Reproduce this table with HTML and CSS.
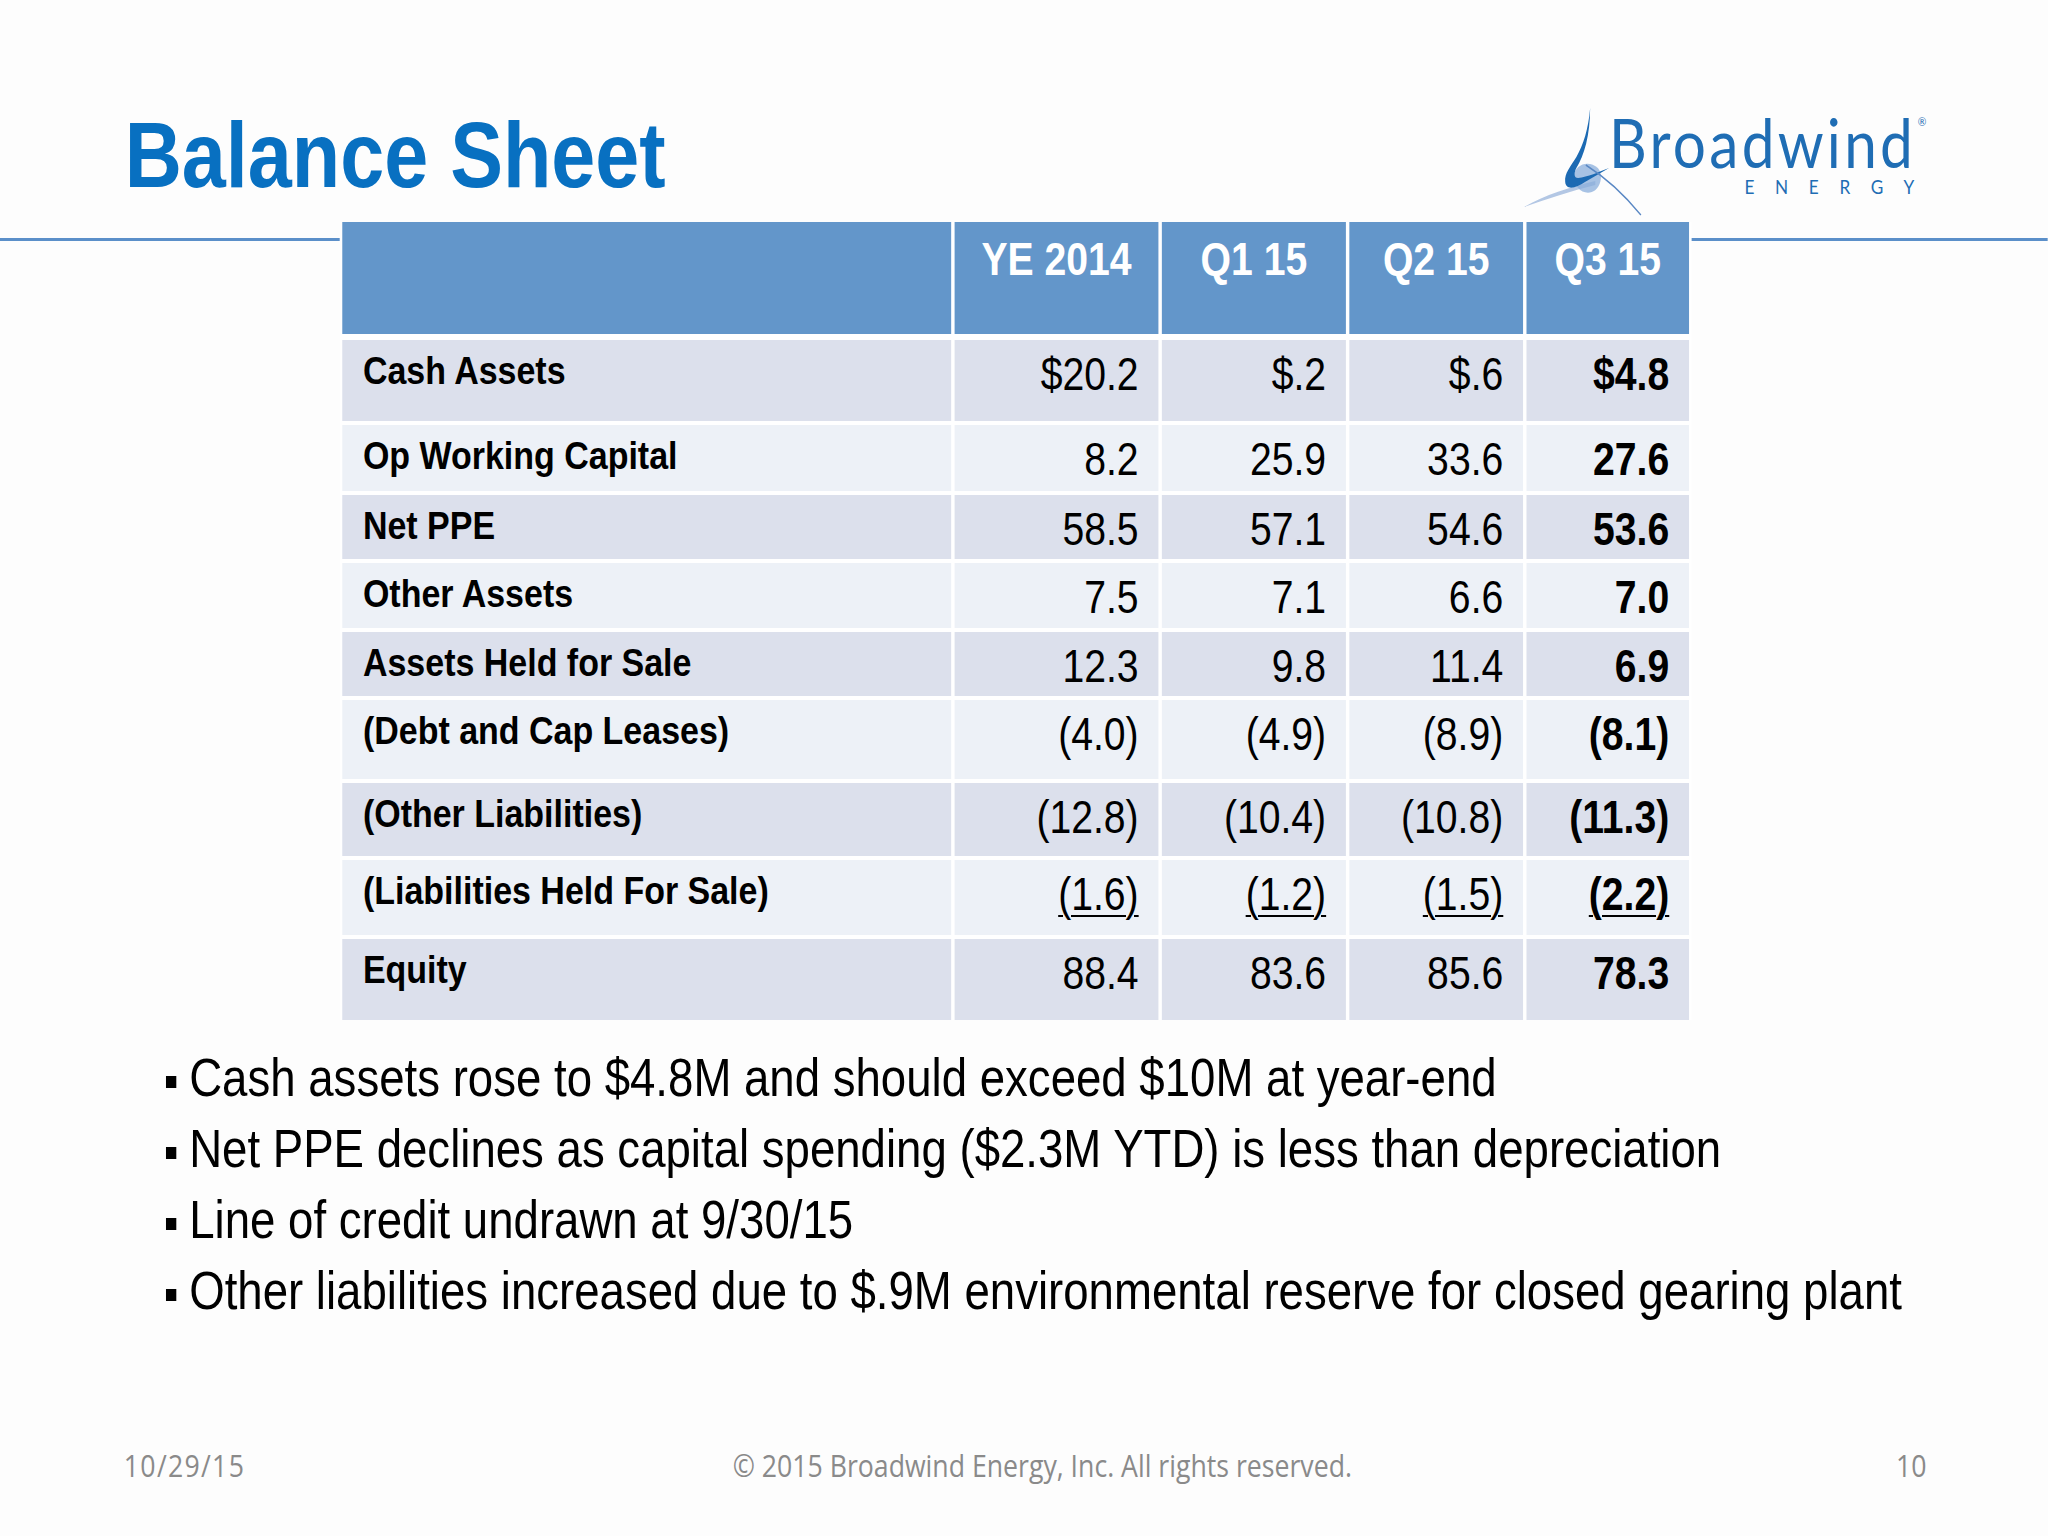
FILE: index.html
```html
<!DOCTYPE html>
<html lang="en">
<head>
<meta charset="utf-8">
<title>Balance Sheet</title>
<link rel="stylesheet" href="styles.css">
</head>
<body>
<div class="frame">
<div class="slide">
  <header class="top">
    <h1 class="title">Balance Sheet</h1>
    <div class="logo">
      <svg class="mark" viewBox="0 0 140 110" width="140" height="110" aria-hidden="true">
        <path d="M1,100 C25,88 55,80 84,74 L84,78 C56,84 28,92 1,100 Z" fill="#b3c7e4"/>
        <path d="M58,70 C61,56 77,53 87,61 C94,68 90,82 80,85 C69,88 60,80 58,70 Z" fill="#8aaedb" opacity="0.75"/>
        <path d="M78,1 C76,22 70,38 62,50 C55,60 48,66 49,75 C50,84 62,81 72,75 L100,61 C88,65 75,70 64,71 C59,71 59,66 62,61 C71,49 78,28 78,1 Z" fill="#1c6ab3"/>
        <path d="M73,58 C95,70 118,88 137,108" fill="none" stroke="#5a88c4" stroke-width="1.6"/>
      </svg>
      <div class="wordmark">
        <div class="brand">Broadwind<span class="reg">®</span></div>
        <div class="energy">ENERGY</div>
      </div>
    </div>
  </header>

  <section class="sheet">
    <div class="grid">
      <div class="hd"></div>
      <div class="hd">YE 2014</div>
      <div class="hd">Q1 15</div>
      <div class="hd">Q2 15</div>
      <div class="hd">Q3 15</div>

      <div class="lb dk">Cash Assets</div>
      <div class="v dk">$20.2</div>
      <div class="v dk">$.2</div>
      <div class="v dk">$.6</div>
      <div class="v dk b">$4.8</div>

      <div class="lb lt">Op Working Capital</div>
      <div class="v lt">8.2</div>
      <div class="v lt">25.9</div>
      <div class="v lt">33.6</div>
      <div class="v lt b">27.6</div>

      <div class="lb dk">Net PPE</div>
      <div class="v dk">58.5</div>
      <div class="v dk">57.1</div>
      <div class="v dk">54.6</div>
      <div class="v dk b">53.6</div>

      <div class="lb lt">Other Assets</div>
      <div class="v lt">7.5</div>
      <div class="v lt">7.1</div>
      <div class="v lt">6.6</div>
      <div class="v lt b">7.0</div>

      <div class="lb dk">Assets Held for Sale</div>
      <div class="v dk">12.3</div>
      <div class="v dk">9.8</div>
      <div class="v dk">11.4</div>
      <div class="v dk b">6.9</div>

      <div class="lb lt">(Debt and Cap Leases)</div>
      <div class="v lt">(4.0)</div>
      <div class="v lt">(4.9)</div>
      <div class="v lt">(8.9)</div>
      <div class="v lt b">(8.1)</div>

      <div class="lb dk">(Other Liabilities)</div>
      <div class="v dk">(12.8)</div>
      <div class="v dk">(10.4)</div>
      <div class="v dk">(10.8)</div>
      <div class="v dk b">(11.3)</div>

      <div class="lb lt">(Liabilities Held For Sale)</div>
      <div class="v lt"><span class="u">(1.6)</span></div>
      <div class="v lt"><span class="u">(1.2)</span></div>
      <div class="v lt"><span class="u">(1.5)</span></div>
      <div class="v lt b"><span class="u">(2.2)</span></div>

      <div class="lb dk">Equity</div>
      <div class="v dk">88.4</div>
      <div class="v dk">83.6</div>
      <div class="v dk">85.6</div>
      <div class="v dk b">78.3</div>
    </div>
  </section>

  <ul class="notes">
    <li>Cash assets rose to $4.8M and should exceed $10M at year-end</li>
    <li>Net PPE declines as capital spending ($2.3M YTD) is less than depreciation</li>
    <li>Line of credit undrawn at 9/30/15</li>
    <li>Other liabilities increased due to $.9M environmental reserve for closed gearing plant</li>
  </ul>

  <footer class="foot">
    <div class="f-left">10/29/15</div>
    <div class="f-mid">© 2015 Broadwind Energy, Inc. All rights reserved.</div>
    <div class="f-right">10</div>
  </footer>
</div>
</div>
</body>
</html>
```

FILE: styles.css
```css
html, body {
  margin: 0;
  padding: 0;
  background: #ffffff;
  overflow: hidden;
}

.frame {
  width: 2048px;
  height: 1536px;
  overflow: hidden;
  background: #fdfdfd;
}

.slide {
  width: 2381px;
  height: 1536px;
  transform: scaleX(0.86);
  transform-origin: 0 0;
  font-family: "Liberation Sans", Arial, sans-serif;
  color: #000;
}

/* ---------- header ---------- */
.top {
  box-sizing: border-box;
  height: 241px;
  padding: 0 141px 0 145px;
  display: flex;
  justify-content: space-between;
  align-items: flex-start;
  border-bottom: 3px solid #5b8fc9;
}

.title {
  margin: 109px 0 0 0;
  font-size: 92px;
  line-height: 92px;
  font-weight: 700;
  color: #0870c1;
}

.logo {
  margin-top: 107px;
  display: flex;
  align-items: flex-start;
}

.mark {
  display: block;
  margin-right: -40px;
}

.wordmark {
  display: flex;
  flex-direction: column;
  align-items: flex-end;
  color: #1f6db4;
  font-family: Lato, "DejaVu Sans", sans-serif;
}

.brand {
  margin-top: 5px;
  font-size: 68px;
  line-height: 60px;
  font-weight: 400;
  letter-spacing: 3.8px;
  position: relative;
  padding-right: 12px;
}

.reg {
  position: absolute;
  right: 0;
  top: 4px;
  font-size: 12px;
  line-height: 12px;
  letter-spacing: 0;
}

.energy {
  margin-top: 4px;
  margin-right: -10px;
  font-size: 20px;
  line-height: 20px;
  letter-spacing: 24px;
}

/* ---------- table ---------- */
.sheet {
  margin: -19px 0 0 395px;
  padding: 0 3px;
  width: 1566px;
  background: #ffffff;
}

.grid {
  display: grid;
  grid-template-columns: 708px 237px 214px 202px 189px;
  grid-template-rows: 114px 81px 66px 64px 65px 64px 79px 73px 75px 81px;
  column-gap: 4px;
  row-gap: 4px;
}

.hd {
  margin-bottom: 2px;
  background: #6396ca;
  color: #ffffff;
  font-weight: 700;
  font-size: 45.5px;
  line-height: 1.15;
  text-align: center;
  padding-top: 12px;
}

.lb {
  font-weight: 700;
  font-size: 39.5px;
  line-height: 1.15;
  padding: 8px 0 0 24px;
}

.v {
  font-size: 45.5px;
  line-height: 1.15;
  text-align: right;
  padding: 9px 23px 0 0;
}

.b {
  font-weight: 700;
}

.dk {
  background: #dce0ec;
}

.lt {
  background: #edf1f7;
}

.u {
  text-decoration: underline;
  text-decoration-thickness: 2px;
  text-underline-offset: 5px;
}

/* ---------- bullets ---------- */
.notes {
  list-style: none;
  margin: 22px 0 0 193px;
  padding: 0;
  font-size: 53px;
  line-height: 71px;
  white-space: nowrap;
}

.notes li::before {
  content: "";
  display: inline-block;
  width: 12px;
  height: 12px;
  background: #000;
  vertical-align: middle;
  margin-right: 15px;
}

/* ---------- footer ---------- */
.foot {
  margin: 119px 141px 0 144px;
  display: flex;
  align-items: center;
  font-family: "Open Sans", "Noto Sans", sans-serif;
  font-size: 31px;
  line-height: 40px;
  color: #8a8a8a;
}

.f-left,
.f-right {
  width: 500px;
}

.f-left {
  letter-spacing: 1.5px;
}

.f-right {
  text-align: right;
}

.f-mid {
  flex: 1;
  text-align: center;
  padding-left: 40px;
}
```
